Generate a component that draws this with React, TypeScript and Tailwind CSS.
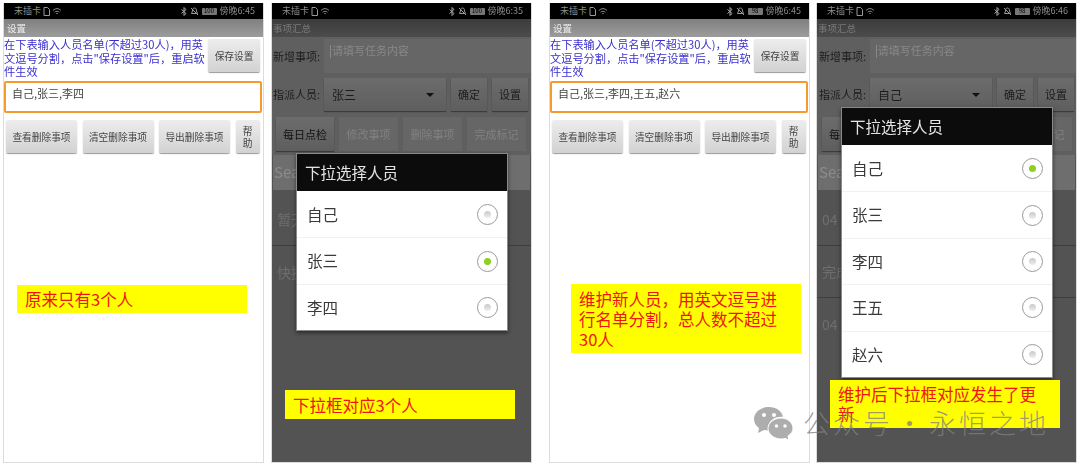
import React from "react";

const font = "font-['Noto_Sans_CJK_SC','Noto_Sans',sans-serif]";

function StatusBar({ time, battery }: { time: string; battery: string }) {
  return (
    <div className="flex h-[16px] items-center justify-between bg-black pl-[10px] pr-[8px] text-[9px] text-[#8c8c8c]">
      <div className="flex items-center gap-[2px]">
        <span>未插卡</span>
        <svg width="7" height="9" viewBox="0 0 7 9" fill="none" stroke="#999"><path d="M1 .5h3.500L6.500 2.500V8.500H1z" /></svg>
        <svg width="10" height="9" viewBox="0 0 10 9" fill="none" stroke="#888"><path d="M1 3.500C3.500 1 6.500 1 9 3.500M2.500 5.200C4 4 6 4 7.500 5.200M4 6.800C4.600 6.300 5.400 6.300 6 6.800" /></svg>
      </div>
      <div className="flex items-center gap-[3px]">
        <svg width="6" height="9" viewBox="0 0 6 9" fill="none" stroke="#aaa"><path d="M.5 2.500L5 6.500L3 8.500V.5L5 2.500L.5 6.500" /></svg>
        <svg width="9" height="9" viewBox="0 0 9 9" fill="none" stroke="#999"><path d="M4.500 1C2.800 1 2.500 2.500 2.500 4L1.500 6.500H7.500L6.500 4C6.500 2.500 6.200 1 4.500 1zM1 1L8 8" /></svg>
        <span className="flex h-[7px] w-[15px] items-center justify-center rounded-[1px] bg-[#777] text-[6px] leading-none text-black">{battery}</span>
        <span>{time}</span>
      </div>
    </div>
  );
}

function GrayButton({ label, className }: { label: string; className: string }) {
  return (
    <div className={`flex shrink-0 items-center justify-center rounded-[2px] bg-gradient-to-b from-[#ededed] to-[#d2d2d2] text-center text-[9.700px] leading-[12px] text-[#444] shadow-[0_1px_1px_#999] ${className}`}>
      {label}
    </div>
  );
}

function SettingsPage({ names, time, battery, caretEnd }: { names: string; time: string; battery: string; caretEnd?: boolean }) {
  const caret = <span className="h-[14px] w-px shrink-0 bg-[#888]" />;
  return (
    <div className="blur-[0.3px]">
      <StatusBar time={time} battery={battery} />
      <div className="flex h-[18px] items-center bg-gradient-to-b from-[#808080] to-[#9c9c9c] pl-[3px] text-[9.500px] text-[#eee]">设置</div>
      <div className="flex items-start justify-between pr-[3px] pt-[1px]">
        <p className="whitespace-nowrap text-[11.200px] leading-[13.700px] text-[#3a2fd0]">
          在下表输入人员名单(不超过30人)，用英
          <br />
          文逗号分割，点击"保存设置"后，重启软
          <br />
          件生效
        </p>
        <GrayButton label="保存设置" className="mt-[1px] h-[33px] w-[52px]" />
      </div>
      <div className="mr-px mt-[2px] flex h-[32px] items-start rounded-[2px] border-2 border-[#f59a2e] bg-white pl-[6px] pt-[1px] text-[11px] leading-[18px] text-[#444]">
        {!caretEnd && <span className="mt-[2px]">{caret}</span>}
        <span>{names}</span>
        {caretEnd && <span className="mt-[2px]">{caret}</span>}
      </div>
      <div className="flex gap-[5.500px] pl-[2px] pt-[7px]">
        <GrayButton label="查看删除事项" className="h-[33px] w-[71px]" />
        <GrayButton label="清空删除事项" className="h-[33px] w-[71px]" />
        <GrayButton label="导出删除事项" className="h-[33px] w-[71px]" />
        <GrayButton label="帮助" className="h-[33px] w-[24px] px-[3px]" />
      </div>
    </div>
  );
}

function Radio({ on }: { on: boolean }) {
  return (
    <div className="flex h-[21px] w-[21px] items-center justify-center rounded-full border-[1.500px] border-[#9a9a9a] bg-white">
      <div className={on ? "h-[7px] w-[7px] rounded-full bg-[#8ed020]" : "h-[7px] w-[7px] rounded-full bg-gradient-to-b from-[#c8c8c8] to-[#efefef]"} />
    </div>
  );
}

function PickerDialog({ items, selected, top }: { items: string[]; selected: string; top: string }) {
  return (
    <div className="absolute left-[24px] w-[212px] border border-[#8a8a8a] bg-white shadow-[0_2px_4px_rgba(0,0,0,0.5)] blur-[0.25px]" style={{ top }}>
      <div className="flex h-[37px] items-center bg-[#0c0c0c] pl-[8px] text-[15.500px] text-[#e4e4e4]">下拉选择人员</div>
      {items.map((name, i) => (
        <div key={name} className={`flex h-[46.400px] items-center justify-between pl-[10px] pr-[9px] text-[15.500px] text-[#3a3a3a] ${i > 0 ? "border-t border-[#f1f1f1]" : ""}`}>
          <span>{name}</span>
          <Radio on={name === selected} />
        </div>
      ))}
    </div>
  );
}

function SummaryPage({ time, battery, person, rows, labelPad, btnPad }: { time: string; battery: string; person: string; rows: string[]; labelPad: string; btnPad: string }) {
  const dimBtn = "bg-gradient-to-b from-[#6c6c6c] to-[#5e5e5e] shadow-[0_1px_1px_#3c3c3c]";
  return (
    <div className="flex h-full flex-col bg-[#535353] blur-[0.3px]">
      <StatusBar time={time} battery={battery} />
      <div className="flex h-[18px] items-center bg-gradient-to-b from-[#3c3c3c] to-[#4c4c4c] pl-[1px] text-[9.500px] text-[#7a7a7a]">事项汇总</div>
      <div className="bg-[#5f5f5f] pb-[4px]">
        <div className={`flex items-center pt-[2px] ${labelPad}`}>
          <span className="w-[51px] text-[11px] text-[#1c1c1c]">新增事项:</span>
          <div className="flex h-[34px] w-[207px] items-start gap-[1px] bg-[#666] pl-[6px] pt-[3px] text-[11px] text-[#888]">
            <span className="mt-[3px] h-[13px] w-px bg-[#888]" />
            <span>请填写任务内容</span>
          </div>
        </div>
        <div className={`flex items-center pt-[5px] ${labelPad}`}>
          <span className="w-[51px] text-[11px] text-[#1c1c1c]">指派人员:</span>
          <div className={`flex h-[33px] w-[122px] items-center justify-between pl-[8px] pr-[12px] text-[12px] text-[#1c1c1c] ${dimBtn}`}>
            <span>{person}</span>
            <span className="h-0 w-0 border-x-[4px] border-t-[4px] border-x-transparent border-t-[#111]" />
          </div>
          <div className={`ml-[5px] flex h-[33px] w-[36px] items-center justify-center text-[11px] text-[#1c1c1c] ${dimBtn}`}>确定</div>
          <div className={`ml-[5px] flex h-[33px] w-[36px] items-center justify-center text-[11px] text-[#1c1c1c] ${dimBtn}`}>设置</div>
        </div>
        <div className={`flex gap-[5px] pt-[6px] text-[11px] ${btnPad}`}>
          <div className={`flex h-[34px] w-[58px] items-center justify-center text-[#111] ${dimBtn}`}>每日点检</div>
          {["修改事项", "删除事项", "完成标记"].map((t) => (
            <div key={t} className="flex h-[34px] w-[59px] items-center justify-center bg-[#666] text-[#828282]">{t}</div>
          ))}
        </div>
      </div>
      <div className="ml-px mr-px flex h-[35px] items-center bg-[#6e6e6e] pl-[1px] text-[15px] text-[#8c8c8c]">Search</div>
      <div className="text-[14px] text-[#6e6e6e]">
        {rows.map((r, i) => (
          <div key={i} className={`flex items-center pl-[5px] ${i === 0 ? "h-[56px] pt-[3px]" : "h-[52px]"} ${i < rows.length - 1 ? "border-b border-[#3e3e3e]" : ""}`}>{r}</div>
        ))}
      </div>
    </div>
  );
}

function Callout({ text, className }: { text: string; className: string }) {
  return <div className={`absolute w-[230px] bg-[#ffff00] pl-[8px] pr-[9px] text-[16.500px] leading-[20px] text-[#f01414] ${className}`}>{text}</div>;
}

function Phone({ children }: { children: React.ReactNode }) {
  return <div className="relative h-[460px] w-[261px] shrink-0 overflow-hidden border-x border-b border-[#dcdcdc] bg-white">{children}</div>;
}

export default function App() {
  return (
    <div className={`relative h-[467px] w-[1080px] overflow-hidden bg-white ${font}`}>
      <div className="flex pl-[3px] pt-[3px]">
        <Phone>
          <SettingsPage names="自己,张三,李四" time="傍晚6:45" battery="100" />
          <Callout text="原来只有3个人" className="left-[13px] top-[282px] flex h-[28px] items-center" />
        </Phone>
        <div className="ml-[7px]">
          <Phone>
            <SummaryPage time="傍晚6:35" battery="100" person="张三" rows={["暂无", "快捷"]} labelPad="pl-[1px]" btnPad="pl-[4px]" />
            <PickerDialog items={["自己", "张三", "李四"]} selected="张三" top="150px" />
            <Callout text="下拉框对应3个人" className="left-[13px] top-[387px] flex h-[29px] items-center" />
          </Phone>
        </div>
        <div className="ml-[17px]">
          <Phone>
            <SettingsPage names="自己,张三,李四,王五,赵六" time="傍晚6:45" battery="98" caretEnd />
            <Callout text="维护新人员，用英文逗号进行名单分割，总人数不超过30人" className="left-[21px] top-[281px] h-[69px] py-[5px]" />
          </Phone>
        </div>
        <div className="ml-[6px]">
          <Phone>
            <SummaryPage time="傍晚6:46" battery="98" person="自己" rows={["04", "完成", "04"]} labelPad="pl-[2px]" btnPad="pl-[5px]" />
            <PickerDialog items={["自己", "张三", "李四", "王五", "赵六"]} selected="自己" top="104px" />
            <Callout text="维护后下拉框对应发生了更新" className="left-[13px] top-[377px] h-[48px] py-[4px]" />
          </Phone>
        </div>
      </div>
      {/* watermark */}
      <div className="absolute left-[754px] top-[405px] flex items-center gap-[9px] text-[27px] font-light leading-[36px] tracking-[3px] text-[#808080]/75">
        <svg width="40" height="34" viewBox="0 0 40 34" fill="#adadad" stroke="#fff" strokeWidth="0">
          <path d="M15 1C7 1 0 6 0 13c0 4 2 7 5 9l-1 5 6-3c1 .3 3 .5 4 .5C13 15 21 10 29 11 28 5 22 1 15 1z" />
          <path d="M27 12c-7 0-13 5-13 10.500S20 33 27 33c1.500 0 3-.2 4-.6l4 1.600-1-4c3-2 5-4.500 5-7.500C39 17 34 12 27 12z" strokeWidth="1" />
          <circle cx="10" cy="9" r="2" fill="#fff" />
          <circle cx="20" cy="9" r="2" fill="#fff" />
          <circle cx="22.500" cy="20" r="1.700" fill="#fff" />
          <circle cx="31" cy="20" r="1.700" fill="#fff" />
        </svg>
        <span className="flex items-center">
          公众号<span className="mx-[3px]">·</span>永恒之地
        </span>
      </div>
    </div>
  );
}
